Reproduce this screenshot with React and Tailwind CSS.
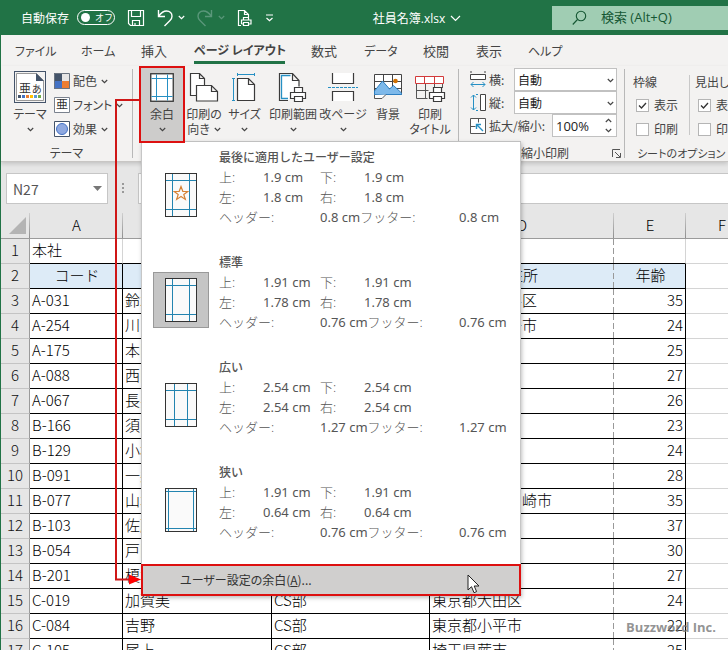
import React from "react";

const rows = [
  ["A-031", "鈴木", "営業部", "東京都世田谷区", 35],
  ["A-254", "川口", "営業部", "東京都八王子市", 24],
  ["A-175", "本田", "営業部", "東京都港区", 25],
  ["A-088", "西田", "営業部", "東京都港区", 27],
  ["A-067", "長井", "営業部", "東京都港区", 26],
  ["B-166", "須田", "総務部", "東京都港区", 23],
  ["B-129", "小林", "総務部", "東京都港区", 24],
  ["B-091", "一条", "総務部", "東京都港区", 28],
  ["B-077", "山本", "総務部", "神奈川県茅ヶ崎市", 35],
  ["B-103", "佐藤", "総務部", "東京都港区", 37],
  ["B-054", "戸田", "総務部", "東京都港区", 30],
  ["B-201", "榎本", "総務部", "東京都港区", 27],
  ["C-019", "加賀美", "CS部", "東京都大田区", 24],
  ["C-084", "吉野", "CS部", "東京都小平市", 22],
  ["C-105", "尾上", "CS部", "埼玉県蕨市", 25],
];

const presets = [
  { name: "最後に適用したユーザー設定", v: ["1.9", "1.9", "1.8", "1.8", "0.8", "0.8"], inset: [7, 7], star: true },
  { name: "標準", v: ["1.91", "1.91", "1.78", "1.78", "0.76", "0.76"], inset: [7, 7], selected: true },
  { name: "広い", v: ["2.54", "2.54", "2.54", "2.54", "1.27", "1.27"], inset: [9, 7] },
  { name: "狭い", v: ["1.91", "1.91", "0.64", "0.64", "0.76", "0.76"], inset: [3, 3] },
];

function Chevron({ className = "" }) {
  return (
    <svg width="7" height="5" viewBox="0 0 7 5" className={"shrink-0 " + className} fill="none" stroke="currentColor" strokeWidth="1.2">
      <path d="M.8 1 3.5 3.6 6.2 1" />
    </svg>
  );
}

function TitleBar() {
  return (
    <header className="flex h-[35px] shrink-0 items-center bg-[#217346] pl-[21px] text-xs text-white">
      <label className="flex items-center gap-2">
        <span>自動保存</span>
        <span className="relative flex h-[15px] w-[38px] items-center rounded-full border border-white">
          <input type="checkbox" role="switch" className="absolute inset-0 appearance-none" />
          <span className="ml-[3px] size-[9px] rounded-full bg-white" />
          <span className="ml-[5px] text-[9px]">オフ</span>
        </span>
      </label>
      <button aria-label="上書き保存" className="ml-3">
        <svg width="18" height="18" viewBox="0 0 18 18" fill="none" stroke="currentColor" strokeWidth="1.2">
          <path d="M1.500 1.500h15v15h-13l-2-2zM4.500 1.500v6h9v-6M5.500 16.500v-5h7v5M8 14v2.500" />
        </svg>
      </button>
      <button aria-label="元に戻す" className="ml-3 flex items-center gap-[5px]">
        <svg width="16" height="18" viewBox="0 0 16 18" fill="none" stroke="currentColor" strokeWidth="1.4">
          <path d="M1.500 1v6.500H8M1.700 7.200C4 4 6.500 2 9.500 2c3.500 0 5.500 2.400 5.500 5.200 0 2-.8 3.100-2 4.300L7.500 17" />
        </svg>
        <Chevron />
      </button>
      <button aria-label="やり直し" className="ml-3 flex items-center gap-[5px] text-[#5a977a]">
        <svg width="16" height="18" viewBox="0 0 16 18" fill="none" stroke="currentColor" strokeWidth="1.4">
          <path d="M14.500 1v6.500H8M14.300 7.200C12 4 9.500 2 6.500 2 3 2 1 4.400 1 7.200c0 2 .8 3.100 2 4.300L8.500 17" />
        </svg>
        <Chevron />
      </button>
      <button aria-label="印刷プレビュー" className="ml-3">
        <svg width="16" height="18" viewBox="0 0 16 18" fill="none" stroke="currentColor" strokeWidth="1.2">
          <path d="M4 16.500H1.500v-15h6l4 4v3M7.500 1.500v4h4M6.500 11V8.500h5V11M4.500 15v-4h9.500v4h-2M6.500 13.500h5v3h-5zM6.500 15h-2" />
        </svg>
      </button>
      <button aria-label="クイック アクセス ツール バーのカスタマイズ" className="ml-3">
        <svg width="9" height="8" viewBox="0 0 9 8" fill="none" stroke="currentColor" strokeWidth="1.2">
          <path d="M1 1h7M1.500 4 4.500 6.800 7.500 4" />
        </svg>
      </button>
      <button className="mx-auto flex items-center gap-[5px] pl-2 pt-[2px] font-['Open_Sans','Noto_Sans_CJK_JP',sans-serif] text-xs">
        社員名簿.xlsx
        <svg width="11" height="7" viewBox="0 0 11 7" fill="none" stroke="currentColor" strokeWidth="1.2">
          <path d="M1 1l4.500 4.500L10 1" />
        </svg>
      </button>
      <label className="flex h-6 w-44 items-center bg-[#a0cdb3] pl-5 text-[#155733]">
        <svg width="15" height="16" viewBox="0 0 15 16" fill="none" stroke="currentColor" strokeWidth="1.1">
          <circle cx="9" cy="6" r="4.700" />
          <path d="M5.500 9.500.8 14.500" />
        </svg>
        <input aria-label="検索" placeholder="検索 (Alt+Q)" className="ml-[14px] w-28 bg-transparent font-['Open_Sans','Noto_Sans_CJK_JP',sans-serif] text-[13px] outline-none placeholder:text-[#155733] placeholder:opacity-100" />
      </label>
    </header>
  );
}

function Tabs() {
  const tab = "flex h-full shrink-0 items-center text-[13px]";
  const kana = "flex h-full shrink-0 items-center text-xs";
  return (
    <nav className="flex h-[31px] pl-[14px] text-[#444]">
      <button className={kana + " w-[66px]"}>ファイル</button>
      <button className={kana + " w-[60px]"}>ホーム</button>
      <button className={tab + " w-[53px]"}>挿入</button>
      <span className="flex w-[117px] shrink-0">
        <button className="h-[29px] w-[91px] whitespace-nowrap border-b-[3px] border-[#217346] pt-1 text-center text-xs font-bold">ページ レイアウト</button>
      </span>
      <button className={tab + " w-[53px]"}>数式</button>
      <button className={kana + " w-[59px]"}>データ</button>
      <button className={tab + " w-[53px]"}>校閲</button>
      <button className={tab + " w-[52px]"}>表示</button>
      <button className={kana}>ヘルプ</button>
    </nav>
  );
}

function BigButton({ icon, lines, width, chevron }) {
  return (
    <button className={"flex shrink-0 flex-col items-center whitespace-nowrap pt-[7px] " + width}>
      {icon}
      <span className="mt-1 leading-4">{lines[0]}</span>
      <span className="flex h-[14px] items-center gap-1">
        {lines[1]}
        {chevron && <Chevron />}
      </span>
    </button>
  );
}

const MarginsIcon = (
  <svg width="24" height="29" viewBox="0 0 24 29" fill="none">
    <rect x=".75" y=".75" width="22.500" height="27.500" fill="#fff" stroke="#333" strokeWidth="1.300" />
    <path d="M6.500 1.500v26M17.500 1.500v26M1.500 5.500h21M1.500 23.500h21" stroke="#2690c4" />
  </svg>
);

const OrientationIcon = (
  <svg width="30" height="29" viewBox="0 0 30 29" fill="#fff" stroke="#3b3b3b" strokeWidth="1.200">
    <path d="M7 22.500H1.500v-22h9l5 5V12M10.500.5v5h5" />
    <path d="M7.500 12.500h15l6 6v9.500h-21zM22.500 12.500v6h6" />
  </svg>
);

const SizeIcon = (
  <svg width="28" height="29" viewBox="0 0 28 29" fill="none">
    <path d="M6.500 1.500h17M6.500 0v3M23.500 0v3M2.500 5.500v22M1 5.500h3M1 27.500h3" stroke="#2690c4" />
    <path d="M6.500 5.500h11l6 6v16h-17zM17.500 5.500v6h6" fill="#fff" stroke="#3b3b3b" strokeWidth="1.200" />
  </svg>
);

const printer = (
  <g fill="#fff" stroke="#3b3b3b" strokeWidth="1.200">
    <path d="M16.500 19.500v-5h8v5M12.500 19.500h15v6h-15z" />
    <path d="M16.500 23.500h8v5h-8z" />
  </g>
);

const PrintAreaIcon = (
  <svg width="30" height="29" viewBox="0 0 30 29" fill="none">
    <path d="M10 27.500H1.500V.5h13l6.500 7v6M14.500.5v7H21" fill="#fff" stroke="#3b3b3b" strokeWidth="1.200" />
    <path d="M10 25.500H3.500v-23h9" stroke="#2690c4" strokeWidth="1.300" />
    {printer}
  </svg>
);

const BreaksIcon = (
  <svg width="30" height="29" viewBox="0 0 30 29" fill="none">
    <path d="M4.500 0v10.500h21V0M4.500 28V18.500h21V28" fill="#fff" stroke="#3b3b3b" strokeWidth="1.200" />
    <path d="M0 14.500h30" stroke="#2690c4" strokeDasharray="3 1" />
  </svg>
);

const BackgroundIcon = (
  <svg width="30" height="29" viewBox="0 0 30 29" fill="none">
    <path d="M1.500 1.500h27v20h-27zM10.500 1.500v20M19.500 1.500v20M1.500 8.500h27M1.500 15.500h27" fill="#fff" stroke="#444" />
    <circle cx="22.500" cy="8" r="2.300" fill="#d27000" />
    <path d="M1.500 18 9.500 8l7 8 4-3.500 8 7.500v1.500h-27z" fill="#7db9ea" stroke="#2d7fc1" />
    <path d="M1.500 22v3.500H9l4-4" fill="#fff" stroke="#555" />
  </svg>
);

const TitlesIcon = (
  <svg width="32" height="29" viewBox="0 0 32 29" fill="none">
    <path d="M2.500 9v16.500h11M11.500 9v16M20.500 9v6M28.500 9v6M2.500 17.500h12" stroke="#555" />
    <path d="M1.500 3.500h28v7h-28zM10.500 3.500v7M20.500 3.500v7" fill="#fff" stroke="#d33a3a" />
    <g transform="translate(3 0)">{printer}</g>
  </svg>
);

function PageThumb({ inset: [x, y], star }) {
  return (
    <svg width="32" height="44" viewBox="0 0 32 44" fill="none">
      <rect x=".5" y=".5" width="31" height="43" fill="#fafafa" stroke="#333" />
      <path d={`M${x + 0.5} 1v42M${31.5 - x} 1v42M1 ${y + 0.5}h30M1 ${43.5 - y}h30`} stroke="#2384b0" />
      {star && <path d="M16 13.500l1.800 4.800 5 .2-4 3 1.500 4.900-4.300-2.900-4.300 2.900 1.500-4.900-4-3 5-.2z" stroke="#d68235" strokeWidth="1.200" />}
    </svg>
  );
}

function MarginsMenu() {
  return (
    <div role="menu" className="absolute left-[2px] top-[75px] z-10 w-[380px] border-t border-[#c0c0c0] bg-white text-left text-[#555] shadow-[1px_2px_4px_rgba(0,0,0,0.25)] [font-feature-settings:normal]">
      <div className="border-x border-[#c6c6c6] pb-[2px]">
        {presets.map((p) => (
          <button role="menuitem" key={p.name} className="flex h-[105px] w-full items-start gap-[10px] pl-[11px] pt-[5px] text-left">
            <span className={"mt-5 flex size-14 shrink-0 items-center justify-center border " + (p.selected ? "border-[#999] bg-[#c5c5c5]" : "border-transparent")}>
              <PageThumb inset={p.inset} star={p.star} />
            </span>
            <span className="flex flex-1 flex-col whitespace-nowrap font-['Noto_Sans','Noto_Sans_CJK_JP',sans-serif] text-[13px] leading-5">
              <span className="pt-px text-xs font-medium leading-[19px]">{p.name}</span>
              <span className="flex">
                <span className="w-11 font-light">上:</span><span className="w-[57px]">{p.v[0]} cm</span>
                <span className="w-11 font-light">下:</span><span>{p.v[1]} cm</span>
              </span>
              <span className="flex">
                <span className="w-11 font-light">左:</span><span className="w-[57px]">{p.v[2]} cm</span>
                <span className="w-11 font-light">右:</span><span>{p.v[3]} cm</span>
              </span>
              <span className="flex">
                <span className="w-[101px] font-light">ヘッダー:</span>
                <span className="w-[139px]">{p.v[4]} cm<span className="font-light">フッター:</span></span>
                <span>{p.v[5]} cm</span>
              </span>
            </span>
          </button>
        ))}
      </div>
      <button role="menuitem" className="flex h-8 w-full items-center border-2 border-[#dd1010] bg-[#d0cfce] pl-[37px] text-xs text-[#333] [font-feature-settings:'palt']">
        <span>ユーザー設定の余白(<u>A</u>)...</span>
        <svg width="13" height="20" viewBox="0 0 13 20" className="ml-auto mr-[39px] mt-2" fill="#fff" stroke="#222">
          <path d="M1 1v15l3.500-3.300 2.500 6 2.600-1.100L7.200 12H12z" />
        </svg>
      </button>
    </div>
  );
}

function SmallButton({ icon, text }) {
  return (
    <button className="flex h-6 items-center gap-[3px] whitespace-nowrap">
      {icon}
      <span>{text}</span>
      <Chevron className="ml-px" />
    </button>
  );
}

function Check({ text, checked }) {
  return (
    <label className="flex h-6 items-center gap-[5px] whitespace-nowrap">
      <span className="relative flex size-[13px] shrink-0">
        <input type="checkbox" defaultChecked={checked} className="size-[13px] appearance-none border border-[#b5b5b5] bg-white" />
        {checked && (
          <svg width="13" height="13" viewBox="0 0 13 13" className="pointer-events-none absolute inset-0" fill="none" stroke="#333" strokeWidth="1.300">
            <path d="M3 6.500 5.500 9 10 4" />
          </svg>
        )}
      </span>
      {text}
    </label>
  );
}

function FitSelect({ id, text, icon }) {
  return (
    <div className="flex h-[23px] items-center">
      {icon}
      <label htmlFor={id} className="ml-[3px] w-[25px]">{text}</label>
      <span className="relative flex">
        <select id={id} className="h-[23px] w-[103px] appearance-none border border-[#c1c1c1] bg-white pl-[3px] text-xs text-[#222]">
          <option>自動</option>
        </select>
        <Chevron className="pointer-events-none absolute right-[3px] top-[10px]" />
      </span>
    </div>
  );
}

function Separator() {
  return <div className="mt-[3px] h-[89px] w-px shrink-0 bg-[#b8b8b8]" />;
}

function Ribbon() {
  return (
    <div className="relative z-10 flex h-24 border-b border-[#c8c6c4] bg-[#f3f2f1] text-xs text-[#444] shadow-[0_2px_4px_rgba(0,0,0,0.15)]">
      <section className="flex w-[131px] shrink-0 flex-col">
        <div className="flex h-20 pl-[13px] pt-[3px]">
          <button className="flex w-8 flex-col items-center whitespace-nowrap pt-[2px]">
            <svg width="32" height="32" viewBox="0 0 32 32" fill="none" className="overflow-visible">
              <rect x=".5" y=".5" width="31" height="31" fill="#f3f2f1" stroke="#44546a" />
              <path d="M2.500 2.500h20l7 7v20h-27z" fill="#fff" stroke="#999" />
              <path d="M22 2l8 8h-8z" fill="#44546a" />
              <text x="5" y="22" fontSize="12" fill="#333">亜</text>
              <text x="18" y="22" fontSize="10" fill="#333">あ</text>
              <path d="M4 24h3v3H4z" fill="#44546a" /><path d="M8 24h3v3H8z" fill="#4472c4" /><path d="M12 24h3v3h-3z" fill="#ed7d31" />
              <path d="M16 24h3v3h-3z" fill="#ffc000" /><path d="M20 24h3v3h-3z" fill="#5b9bd5" /><path d="M24 24h3v3h-3z" fill="#70ad47" />
            </svg>
            <span className="mt-[3px] leading-4">テーマ</span>
            <span className="flex h-[14px] items-center"><Chevron /></span>
          </button>
          <div className="ml-2 flex flex-col">
            <SmallButton text="配色" icon={
              <svg width="16" height="16" viewBox="0 0 16 16"><path fill="#44546a" d="M0 0h8v8H0z" /><path fill="#e7e6e6" d="M8 0h8v8H8z" /><path fill="#4472c4" d="M0 8h8v8H0z" /><path fill="#ed7d31" d="M8 8h8v8H8z" /><path d="M.5.5h15v15H.5z" fill="none" stroke="#6b7480" /></svg>} />
            <SmallButton text="フォント" icon={
              <svg width="16" height="16" viewBox="0 0 16 16" className="overflow-visible"><path d="M.5.5h15v15H.5z" fill="#fff" stroke="#7a828e" /><text x="2" y="12" fontSize="12" fill="#333">亜</text></svg>} />
            <SmallButton text="効果" icon={
              <svg width="16" height="16" viewBox="0 0 16 16"><path d="M.5.5h15v15H.5z" fill="#fff" stroke="#44546a" /><circle cx="8" cy="8" r="5.500" fill="#8fa9e0" stroke="#4472c4" /></svg>} />
          </div>
        </div>
        <div className="text-center leading-[14px]">テーマ</div>
      </section>
      <Separator />
      <section className="flex w-[325px] shrink-0">
        <div className="relative ml-[6px] w-[46px] shrink-0">
          <MarginsMenu />
          <button aria-haspopup="menu" aria-expanded="true" className="relative z-20 flex h-[77px] w-[46px] flex-col items-center border-2 border-[#dd1010] bg-[#cdcccb] pt-[5px]">
            {MarginsIcon}
            <span className="mt-1 leading-4">余白</span>
            <span className="flex h-[14px] items-center"><Chevron /></span>
          </button>
        </div>
        <BigButton width="w-[38px]" icon={OrientationIcon} lines={["印刷の", "向き"]} chevron />
        <BigButton width="w-[43px]" icon={SizeIcon} lines={["サイズ"]} chevron />
        <BigButton width="w-[54px]" icon={PrintAreaIcon} lines={["印刷範囲"]} chevron />
        <BigButton width="w-[46px]" icon={BreaksIcon} lines={["改ページ"]} chevron />
        <BigButton width="w-[44px]" icon={BackgroundIcon} lines={["背景"]} />
        <BigButton width="w-[40px]" icon={TitlesIcon} lines={["印刷", "タイトル"]} />
      </section>
      <Separator />
      <section className="flex w-[165px] shrink-0 flex-col pl-[11px] pt-[2px]">
        <FitSelect id="fit-w" text="横:" icon={
          <svg width="16" height="17" viewBox="0 0 16 17" fill="none"><path d="M1 0v2M15 0v2" stroke="#444" /><path d="M.5 3.500h15v5H.5z" fill="#fff" stroke="#444" /><path d="M1 13.500h14M3.500 11 1 13.500 3.500 16M12.500 11l2.500 2.500-2.500 2.500" stroke="#2690c4" /></svg>} />
        <FitSelect id="fit-h" text="縦:" icon={
          <svg width="16" height="17" viewBox="0 0 16 17" fill="none"><path d="M10.500.5h5v16h-5z" fill="#fff" stroke="#444" /><path d="M3.500 1v15M1 3.500 3.500 1 6 3.500M1 13.500 3.500 16 6 13.500M6 .5h2M6 16.500h2" stroke="#2690c4" /></svg>} />
        <div className="flex h-[23px] items-center">
          <svg width="16" height="16" viewBox="0 0 16 16" fill="none"><path d="M.5.5h15v15H.5z" fill="#fff" stroke="#555" /><path d="M.5 8.500h5M8.500.5v4" stroke="#555" /><path d="M13 13 6.500 6.500M6.500 11V6.500H11" stroke="#2690c4" strokeWidth="1.400" /></svg>
          <label htmlFor="scale" className="ml-[3px] w-[63px] whitespace-nowrap">拡大/縮小:</label>
          <span className="relative flex">
            <input id="scale" defaultValue="100%" className="h-[23px] w-[65px] border border-[#c1c1c1] bg-white pl-[3px] font-['Open_Sans',sans-serif] text-[13px] text-[#222]" />
            <Chevron className="absolute right-[5px] top-1 rotate-180" />
            <Chevron className="absolute bottom-1 right-[5px]" />
          </span>
        </div>
        <div className="mt-[9px] flex items-center pl-[27px] leading-[14px]">
          <span>拡大縮小印刷</span>
          <svg width="9" height="9" viewBox="0 0 9 9" className="ml-auto mr-[3px]" fill="none" stroke="#555"><path d="M.5 8V.5H8M3 3l5 5M8.500 4v4.500H4" /></svg>
        </div>
      </section>
      <Separator />
      <section className="flex min-w-0 flex-1 flex-col overflow-hidden">
        <div className="flex h-20 pl-[8px] pt-1">
          <fieldset className="w-[56px] shrink-0">
            <legend className="h-[23px] leading-[23px]">枠線</legend>
            <div className="pl-[3px]">
              <Check text="表示" checked />
              <Check text="印刷" />
            </div>
          </fieldset>
          <div className="mt-[5px] h-[60px] w-px shrink-0 bg-[#c8c8c8]" />
          <fieldset className="ml-[5px] shrink-0">
            <legend className="h-[23px] leading-[23px]">見出し</legend>
            <div className="pl-[3px]">
              <Check text="表示" checked />
              <Check text="印刷" />
            </div>
          </fieldset>
        </div>
        <div className="whitespace-nowrap pl-3 text-[11px] leading-[14px]">シートのオプション</div>
      </section>
    </div>
  );
}

function FormulaBar() {
  return (
    <div className="flex h-[42px] shrink-0 items-end bg-[#e6e6e6] pl-[5px]">
      <label className="flex h-[31px] w-[102px] items-center border border-[#c6c6c6] bg-white pl-[6px] pr-[5px]">
        <input aria-label="名前ボックス" defaultValue="N27" className="w-full min-w-0 bg-transparent text-sm text-[#555] outline-none" />
        <svg width="9" height="5" viewBox="0 0 9 5" className="shrink-0" fill="#777"><path d="M0 0h9L4.500 5z" /></svg>
      </label>
      <svg width="3" height="12" viewBox="0 0 3 12" className="mb-[10px] ml-[14px]" fill="#999"><path d="M0 1h2v2H0zM0 5h2v2H0zM0 9h2v2H0z" /></svg>
      <input aria-label="数式バー" className="ml-[13px] h-[31px] min-w-0 flex-1 border-y border-l border-[#c6c6c6] bg-white" />
    </div>
  );
}

function Sheet() {
  const head = "border-b border-[#9b9b9b] pt-[8px] text-center align-middle font-light";
  const tick = " relative after:absolute after:bottom-0 after:right-0 after:h-[25px] after:w-px after:bg-linear-to-b after:from-[#cfcfcf] after:to-[#8f8f8f]";
  const rowHead = "border-b border-r border-b-[#c4c4c4] border-r-[#9b9b9b] bg-[#e6e6e6] pb-[2px] text-center font-light text-[#111]";
  const cell = "border-b border-r border-black whitespace-nowrap pb-[2px] pl-[2px]";
  const dashed = "border-b border-black whitespace-nowrap pb-[2px] pl-[2px] bg-[repeating-linear-gradient(180deg,#999_0_6px,transparent_6px_9px)] bg-[length:1px_100%] bg-right bg-no-repeat";
  const title = " bg-[#ddebf7] text-center";
  const free = "border-b border-r border-[#d4d4d4]";
  return (
    <main className="min-h-0 flex-1 overflow-hidden">
      <table className="w-[757px] table-fixed border-separate border-spacing-0 bg-white text-[15px] font-light leading-[22px] text-black">
        <colgroup>
          <col className="w-[29px]" /><col className="w-[93px]" /><col className="w-[149px]" /><col className="w-[158px]" />
          <col className="w-[184px]" /><col className="w-[72px]" /><col className="w-[72px]" />
        </colgroup>
        <thead>
          <tr className="h-[35px] bg-[#e6e6e6]">
            <th className={head + tick} aria-label="すべて選択">
              <svg width="17" height="17" viewBox="0 0 17 17" className="ml-2" fill="#b4b4b4"><path d="M17 0v17H0z" /></svg>
            </th>
            {["A", "B", "C", "D", "E", "F"].map((c) => <th key={c} className={head + tick}>{c}</th>)}
          </tr>
        </thead>
        <tbody>
          <tr className="h-[25px]">
            <th className={rowHead}>1</th>
            <td className="border-b border-r border-b-black border-r-[#d4d4d4] pb-[2px] pl-[2px]">本社</td>
            <td className="border-b border-black" />
            <td className="border-b border-black" />
            <td className={dashed} />
            <td className="border-b border-r border-b-black border-r-[#d4d4d4]" />
            <td className={free} />
          </tr>
          <tr className="h-[25px]">
            <th className={rowHead}>2</th>
            <td className={cell + title}>コード</td>
            <td className={cell + title}>氏名</td>
            <td className={cell + title}>部署</td>
            <td className={dashed + " bg-[#ddebf7] text-center"}>住所</td>
            <td className={cell + title}>年齢</td>
            <td className={free} />
          </tr>
          {rows.map((r, i) => (
            <tr key={r[0]} className="h-[25px]">
              <th className={rowHead}>{i + 3}</th>
              <td className={cell}>{r[0]}</td>
              <td className={cell}>{r[1]}</td>
              <td className={cell}>{r[2]}</td>
              <td className={dashed}>{r[3]}</td>
              <td className={cell + " pr-[2px] text-right"}>{r[4]}</td>
              <td className={free} />
            </tr>
          ))}
        </tbody>
      </table>
    </main>
  );
}

export default function App() {
  return (
    <div className="relative flex h-screen flex-col overflow-hidden bg-[#f3f2f1] font-['Noto_Sans_CJK_JP',sans-serif]">
      <TitleBar />
      <div className="flex min-h-0 flex-1 flex-col border-l border-[#217346]">
        <div className="[font-feature-settings:'palt']">
          <Tabs />
          <Ribbon />
        </div>
        <FormulaBar />
        <Sheet />
      </div>
      <svg width="28" height="490" viewBox="0 0 28 490" className="pointer-events-none absolute left-[114px] top-[98px] z-20" fill="none">
        <path d="M26 2H2v479.500h14" stroke="#cf1717" strokeWidth="2" />
        <path d="M15 476.500l12 5-12 5z" fill="#f00" />
      </svg>
      <div className="pointer-events-none absolute bottom-[13px] right-3 z-20 font-['Open_Sans',sans-serif] text-[13px] font-bold leading-5 text-[#777]/80">Buzzword Inc.</div>
    </div>
  );
}
